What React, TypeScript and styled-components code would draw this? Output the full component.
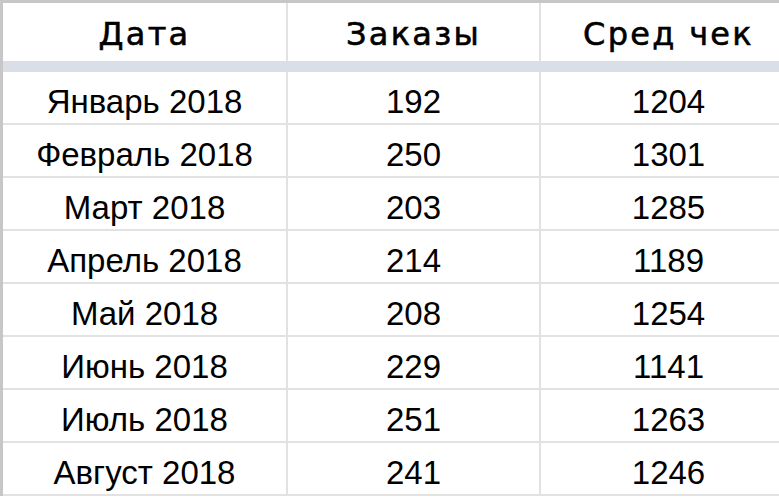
import React from 'react';
import styled, { createGlobalStyle } from 'styled-components';

interface MonthStat {
    month: string;
    orders: number;
    avgCheck: number;
}

const rows: MonthStat[] = [
    { month: 'Январь 2018', orders: 192, avgCheck: 1204 },
    { month: 'Февраль 2018', orders: 250, avgCheck: 1301 },
    { month: 'Март 2018', orders: 203, avgCheck: 1285 },
    { month: 'Апрель 2018', orders: 214, avgCheck: 1189 },
    { month: 'Май 2018', orders: 208, avgCheck: 1254 },
    { month: 'Июнь 2018', orders: 229, avgCheck: 1141 },
    { month: 'Июль 2018', orders: 251, avgCheck: 1263 },
    { month: 'Август 2018', orders: 241, avgCheck: 1246 },
];

const GlobalStyle = createGlobalStyle`
    html, body {
        margin: 0;
        padding: 0;
        background: #ffffff;
        overflow: hidden;
    }
`;

const Sheet = styled.div`
    width: 798px;
    border-top: 3px solid #c7c7c7;
    border-left: 3px solid #c7c7c7;
    color: #000;
`;

const Row = styled.div<{ $header?: boolean }>`
    display: grid;
    grid-template-columns: 285px 253px 257px;
    height: ${({ $header }) => ($header ? '58px' : '53px')};
    border-bottom: ${({ $header }) => ($header ? '11px solid #dadfe7' : 'none')};
`;

const Cell = styled.div<{ $header?: boolean }>`
    display: flex;
    align-items: flex-end;
    justify-content: center;
    border-right: 2px solid #e2e2e2;
    border-bottom: ${({ $header }) => ($header ? 'none' : '2px solid #e2e2e2')};
    padding-bottom: ${({ $header }) => ($header ? '9px' : '3px')};
    font-family: ${({ $header }) =>
        $header ? "'DejaVu Sans', 'Noto Sans', sans-serif" : "'Liberation Sans', Arial, sans-serif"};
    font-size: ${({ $header }) => ($header ? '32px' : '33px')};
    letter-spacing: ${({ $header }) => ($header ? '2.3px' : '0')};
    -webkit-text-stroke: ${({ $header }) => ($header ? '0.6px #000' : '0')};
    line-height: 36px;
    white-space: nowrap;
`;

const App: React.FC = () => (
    <>
        <GlobalStyle />
        <Sheet>
            <Row $header>
                <Cell $header>Дата</Cell>
                <Cell $header>Заказы</Cell>
                <Cell $header>Сред чек</Cell>
            </Row>
            {rows.map((r) => (
                <Row key={r.month}>
                    <Cell>{r.month}</Cell>
                    <Cell>{r.orders}</Cell>
                    <Cell>{r.avgCheck}</Cell>
                </Row>
            ))}
        </Sheet>
    </>
);

export default App;
